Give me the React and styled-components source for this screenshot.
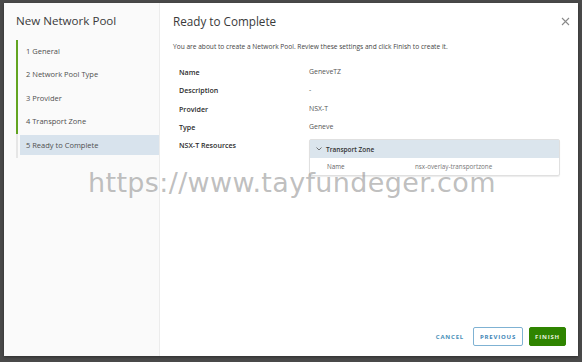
import React from 'react'
import styled, { createGlobalStyle } from 'styled-components'

const GlobalStyle = createGlobalStyle`
  html, body {
    margin: 0;
    padding: 0;
    background: #4a4a4a;
  }
  body {
    font-family: 'Open Sans', 'Liberation Sans', sans-serif;
  }
`

const steps = ['1 General', '2 Network Pool Type', '3 Provider', '4 Transport Zone', '5 Ready to Complete']

const summary = [
  { label: 'Name', value: 'GeneveTZ' },
  { label: 'Description', value: '-' },
  { label: 'Provider', value: 'NSX-T' },
  { label: 'Type', value: 'Geneve' },
]

const App = () => {
  return (
    <Screen>
      <GlobalStyle />
      <Modal>
        <Sidebar>
          <WizardTitle>New Network Pool</WizardTitle>
          <StepList>
            {steps.map((step, i) => (
              <Step key={step} done={i < steps.length - 1} active={i === steps.length - 1}>
                <StepText>{step}</StepText>
              </Step>
            ))}
          </StepList>
        </Sidebar>
        <Content>
          <Header>
            <PageTitle>Ready to Complete</PageTitle>
            <CloseButton type="button" aria-label="close">
              <svg width="9" height="9" viewBox="0 0 9 9">
                <path d="M1 1 L8 8 M8 1 L1 8" stroke="#8a8a8a" strokeWidth="1.1" />
              </svg>
            </CloseButton>
          </Header>
          <Intro>
            You are about to create a Network Pool. Review these settings and click Finish to create it.
          </Intro>
          <Summary>
            {summary.map((row) => (
              <React.Fragment key={row.label}>
                <Label>{row.label}</Label>
                <Value>{row.value}</Value>
              </React.Fragment>
            ))}
            <Label>NSX-T Resources</Label>
            <ResourceCard>
              <CardHeader>
                <svg width="6" height="4" viewBox="0 0 6 4">
                  <path d="M0.5 0.5 L3 3 L5.5 0.5" stroke="#555" strokeWidth="0.8" fill="none" />
                </svg>
                Transport Zone
              </CardHeader>
              <CardRow>
                <CardKey>Name</CardKey>
                <CardValue>nsx-overlay-transportzone</CardValue>
              </CardRow>
            </ResourceCard>
          </Summary>
          <Footer>
            <FlatButton type="button">CANCEL</FlatButton>
            <OutlineButton type="button">PREVIOUS</OutlineButton>
            <PrimaryButton type="button">FINISH</PrimaryButton>
          </Footer>
        </Content>
        <Watermark>https://www.tayfundeger.com</Watermark>
      </Modal>
    </Screen>
  )
}

export default App

const Screen = styled.div`
  width: 582px;
  height: 362px;
  padding: 3px 4px 0 4px;
  box-sizing: border-box;
  overflow: hidden;
`

const Modal = styled.div`
  position: relative;
  width: 574px;
  height: 353px;
  display: flex;
  background: #fff;
  box-shadow: 0 1px 3px rgba(0, 0, 0, 0.4);
`

const Sidebar = styled.aside`
  width: 156px;
  background: #fafafa;
  border-right: 1px solid #ececec;
  padding: 10px 0 0 12px;
  box-sizing: border-box;
  flex-shrink: 0;
`

const WizardTitle = styled.h1`
  margin: 0 0 11px 0;
  font-size: 11.6px;
  font-weight: 400;
  color: #3a3a3a;
  line-height: 16px;
`

const StepList = styled.ol`
  list-style: none;
  margin: 0;
  padding: 0;
`

const Step = styled.li`
  position: relative;
  height: 23.5px;
  display: flex;
  align-items: center;
  border-left: 2px solid ${(props) => (props.done ? '#62a420' : '#e6e6e6')};
  &::before {
    content: '';
    display: ${(props) => (props.active ? 'block' : 'none')};
    position: absolute;
    left: 2px;
    right: 0;
    top: 1px;
    bottom: 3px;
    background: #d8e3ed;
  }
`

const StepText = styled.span`
  position: relative;
  padding-left: 8px;
  margin-top: -2px;
  font-size: 7.5px;
  color: #4f4f4f;
`

const Content = styled.main`
  flex: 1;
  display: flex;
  flex-direction: column;
  padding: 10px 12px 10px 13px;
  box-sizing: border-box;
`

const Header = styled.div`
  display: flex;
  justify-content: space-between;
  align-items: center;
`

const PageTitle = styled.h2`
  margin: 0;
  font-size: 11.7px;
  font-weight: 400;
  color: #3a3a3a;
  line-height: 16px;
`

const CloseButton = styled.button`
  border: none;
  background: transparent;
  padding: 0;
  margin-right: -4px;
  display: flex;
  cursor: pointer;
`

const Intro = styled.p`
  margin: 13px 0 0 0;
  font-size: 6.6px;
  color: #444;
  line-height: 10px;
`

const Summary = styled.div`
  display: grid;
  grid-template-columns: 130px 251px;
  grid-auto-rows: minmax(18.3px, auto);
  align-items: start;
  margin: 15px 0 0 6px;
`

const Label = styled.div`
  font-size: 7.1px;
  font-weight: 600;
  color: #2c2c2c;
  line-height: 10px;
`

const Value = styled.div`
  font-size: 6.9px;
  color: #555;
  line-height: 10px;
`

const ResourceCard = styled.div`
  margin-top: -1px;
  border: 1px solid #e0e0e0;
  border-radius: 2px;
  box-shadow: 0 1px 1px rgba(0, 0, 0, 0.08);
`

const CardHeader = styled.div`
  display: flex;
  align-items: center;
  gap: 4px;
  height: 18px;
  padding-left: 6px;
  background: #dbe5ed;
  font-size: 6.5px;
  font-weight: 600;
  color: #333;
`

const CardRow = styled.div`
  display: flex;
  align-items: center;
  height: 17px;
  padding-left: 17px;
  font-size: 6.3px;
  color: #666;
`

const CardKey = styled.span`
  width: 88px;
`

const CardValue = styled.span`
  color: #777;
`

const Footer = styled.div`
  margin-top: auto;
  display: flex;
  justify-content: flex-end;
  align-items: center;
  gap: 6px;
`

const ButtonBase = styled.button`
  height: 19px;
  font-family: 'Open Sans', 'Liberation Sans', sans-serif;
  font-size: 6px;
  font-weight: 700;
  letter-spacing: 0.8px;
  border-radius: 2px;
  padding: 0 8px;
  cursor: pointer;
`

const FlatButton = styled(ButtonBase)`
  background: transparent;
  border: 1px solid transparent;
  color: #4a90b8;
  padding: 0 2px;
  margin-right: 0;
`

const OutlineButton = styled(ButtonBase)`
  background: #fff;
  border: 1px solid #7fb2d3;
  color: #3d85b6;
  width: 50px;
  padding: 0;
`

const PrimaryButton = styled(ButtonBase)`
  background: #2f8400;
  border: 1px solid #2f8400;
  color: #e6f2dc;
  width: 37px;
  padding: 0;
`

const Watermark = styled.div`
  position: absolute;
  left: 84px;
  top: 164px;
  font-family: 'DejaVu Sans', 'Open Sans', sans-serif;
  font-size: 27px;
  color: rgba(150, 150, 150, 0.62);
  letter-spacing: 0.35px;
  pointer-events: none;
  white-space: nowrap;
`
